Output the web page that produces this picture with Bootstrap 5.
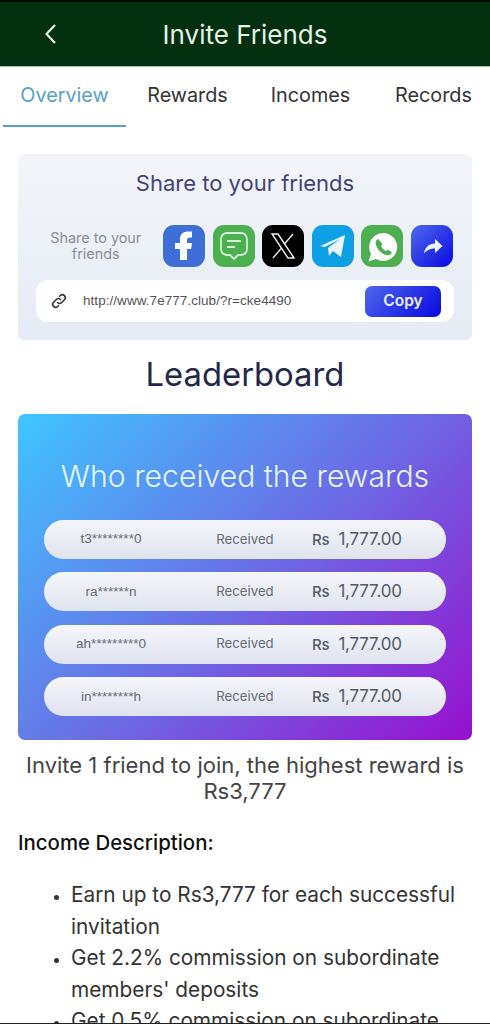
<!DOCTYPE html>
<html lang="en">
<head>
<meta charset="utf-8">
<title>Invite Friends</title>
<link href="https://cdn.jsdelivr.net/npm/bootstrap@5.3.0/dist/css/bootstrap.min.css" rel="stylesheet">
<style>
html,body{height:1024px;overflow:hidden;}
body{font-family:Inter,"Liberation Sans",sans-serif;background:#fff;color:#333;border-top:2px solid #020a04;position:relative;}
.bottom-edge{position:absolute;left:0;right:0;top:1021px;height:1px;background:#222;}
.top-bar{height:65px;background:#03300f;color:#e4f3e6;font-size:26px;border-bottom:1px solid #a9c4ab;}
.back-btn{left:44px;top:21px;line-height:0;}
.tab-row{height:60px;padding:0 3px;overflow:hidden;}
.tab-item{flex:0 0 123px;font-size:19.8px;color:#333;height:60px;line-height:57px;text-align:center;white-space:nowrap;}
.tab-item.on{color:#5b9fc9;border-bottom:2px solid #5b9fc9;}
.share-box{margin:27px 18px 0;height:186px;border-radius:6px;background:linear-gradient(180deg,#f3f5fa,#e5ebf4);padding-top:16px;}
.share-title{font-size:22px;color:#45437a;line-height:27px;text-align:center;}
.share-row{margin-top:28px;height:42px;gap:7.5px;}
.share-label{width:137.500px;padding-left:19px;padding-right:1px;font-size:14.4px;line-height:16.5px;color:#8a8d96;text-align:center;}
.app-tile{width:42px;height:42px;border-radius:11px;flex:0 0 42px;}
.app-tile svg{display:block;width:42px;height:42px;}
.tile-fb{background:#3f6fd6}.tile-sms,.tile-wa{background:#4caf50}.tile-x{background:#000}.tile-tg{background:#0f9fe4}.tile-more{background:linear-gradient(135deg,#5069ee,#0808e0)}
.link-bar{margin:13px 18px 0;height:42px;border-radius:12px;background:#fff;padding:0 13px 0 14px;}
.link-text{font-family:"Liberation Sans",sans-serif;font-size:13.500px;color:#555;margin-left:15px;letter-spacing:.05px;}
.copy-btn{width:76px;height:31px;padding:0;border:0;border-radius:7px;color:#eef;font-size:15.5px;font-weight:600;background:linear-gradient(135deg,#4e68ec,#0808e0);}
.board-head{font-size:32.8px;line-height:38px;color:#23284a;text-align:center;margin:15px 0 21px;font-weight:400;}
.reward-box{margin:0 18px;height:326px;border-radius:7px;background:linear-gradient(135deg,#3fc6ff 0%,#6a6ee6 50%,#9710cf 100%);padding:45px 26px 0;}
.reward-title{font-size:30.2px;line-height:35px;color:#e4f4fb;text-align:center;margin-bottom:26px;font-weight:300;}
.winner-row{height:39px;border-radius:20px;background:linear-gradient(180deg,#f5f6fb,#dfe3ee);margin-bottom:13.400px;color:#666b75;font-size:13.2px;}
.w-name{width:134px;text-align:center;font-family:"Liberation Sans",sans-serif;font-size:13.500px;}
.w-state{width:134px;text-align:center;}
.w-money{margin-left:0;font-size:17px;color:#555b66;letter-spacing:-.2px;}
.w-money b{font-size:15px;font-weight:500;margin-right:9px;}
.invite-note{font-size:22px;line-height:26px;color:#444;text-align:center;margin:12px 0 0;}
.income-head{font-size:20.4px;font-weight:500;color:#111;margin:26px 0 0 18px;line-height:26px;}
.income-list{margin:23px 18px 0 0;padding-left:71px;font-size:20.8px;line-height:31.5px;color:#333;}
.income-list li::marker{font-size:16px;}
</style>
</head>
<body>
<header class="top-bar position-relative d-flex align-items-center justify-content-center">
  <a class="back-btn position-absolute" href="#" aria-label="Back"><svg width="14" height="22" viewBox="0 0 14 22" fill="none" stroke="#e4f3e6" stroke-width="2.2"><path d="M11 2 2.5 11 11 20"/></svg></a>
  <span>Invite Friends</span>
</header>
<nav class="tab-row d-flex">
  <div class="tab-item on">Overview</div>
  <div class="tab-item">Rewards</div>
  <div class="tab-item">Incomes</div>
  <div class="tab-item">Records</div>
</nav>

<section class="share-box">
  <div class="share-title">Share to your friends</div>
  <div class="share-row d-flex align-items-center">
    <div class="share-label">Share to your friends</div>
    <div class="app-tile tile-fb"><svg viewBox="0 0 42 42"><path fill="#fff" d="M17 35V24h-5v-6h5v-4c0-4.500 3-7.500 7.500-7.500H29v6h-2.500c-1.500 0-2.500 1-2.500 2.500v3h5l-.8 6H24v11z"/></svg></div>
    <div class="app-tile tile-sms"><svg viewBox="0 0 42 42" fill="none" stroke="#d6efd6" stroke-width="1.800"><path d="M14 8h14a6 6 0 0 1 6 6v10a6 6 0 0 1-6 6h-3l-4 4-4-4h-3a6 6 0 0 1-6-6V14a6 6 0 0 1 6-6z"/><path d="M14 16h14M14 22h8"/></svg></div>
    <div class="app-tile tile-x"><svg viewBox="0 0 42 42" fill="none" stroke="#eee" stroke-width="1.400"><path d="M10 9h6l16 24h-6zM31 9 22 19.500M19.500 23 11 33"/></svg></div>
    <div class="app-tile tile-tg"><svg viewBox="0 0 42 42"><path fill="#eaf6fd" d="M8 21 33 10l-4 22-8-6-4 5-1-8 12-9-15 8z"/></svg></div>
    <div class="app-tile tile-wa"><svg viewBox="0 0 42 42"><path fill="#fff" d="M22 8a14 14 0 0 0-12 21l-2.500 7.500L15 34A14 14 0 1 0 22 8z"/><path fill="#4caf50" d="M17 14c-2 1-3 3-2 6 1 4 6 9 10 10 3 1 5-.5 6-2.500l-4-3-2 1.500c-2-.8-4-3-5-5l1.500-2z"/></svg></div>
    <div class="app-tile tile-more"><svg viewBox="0 0 42 42"><path fill="#eef0ff" d="M24 14l7.500 7-7.500 7v-4.500c-5 0-8 1.500-11 5 .8-6 5-10 11-10z"/></svg></div>
  </div>
  <div class="link-bar d-flex align-items-center">
    <svg width="18" height="18" viewBox="0 0 18 18" fill="none" stroke="#333" stroke-width="1.600" stroke-linecap="round"><path d="M7.500 10.500a3 3 0 0 0 4.200 0l3-3a3 3 0 0 0-4.200-4.200L9.500 4.300"/><path d="M10.500 7.500a3 3 0 0 0-4.200 0l-3 3a3 3 0 0 0 4.200 4.200l1-1"/></svg>
    <span class="link-text flex-grow-1">http://www.7e777.club/?r=cke4490</span>
    <button class="btn copy-btn" type="button">Copy</button>
  </div>
</section>

<h2 class="board-head">Leaderboard</h2>

<section class="reward-box">
  <div class="reward-title">Who received the rewards</div>
  <div class="winner-row d-flex align-items-center"><span class="w-name">t3********0</span><span class="w-state">Received</span><span class="w-money"><b>Rs</b>1,777.00</span></div>
  <div class="winner-row d-flex align-items-center"><span class="w-name">ra******n</span><span class="w-state">Received</span><span class="w-money"><b>Rs</b>1,777.00</span></div>
  <div class="winner-row d-flex align-items-center"><span class="w-name">ah*********0</span><span class="w-state">Received</span><span class="w-money"><b>Rs</b>1,777.00</span></div>
  <div class="winner-row d-flex align-items-center"><span class="w-name">in********h</span><span class="w-state">Received</span><span class="w-money"><b>Rs</b>1,777.00</span></div>
</section>

<p class="invite-note">Invite 1 friend to join, the highest reward is<br>Rs3,777</p>
<div class="income-head">Income Description:</div>
<ul class="income-list">
  <li>Earn up to Rs3,777 for each successful invitation</li>
  <li>Get 2.2% commission on subordinate members' deposits</li>
  <li>Get 0.5% commission on subordinate members' bets</li>
</ul>
<div class="bottom-edge"></div>
<script src="https://cdn.jsdelivr.net/npm/bootstrap@5.3.0/dist/js/bootstrap.bundle.min.js"></script>
</body>
</html>
